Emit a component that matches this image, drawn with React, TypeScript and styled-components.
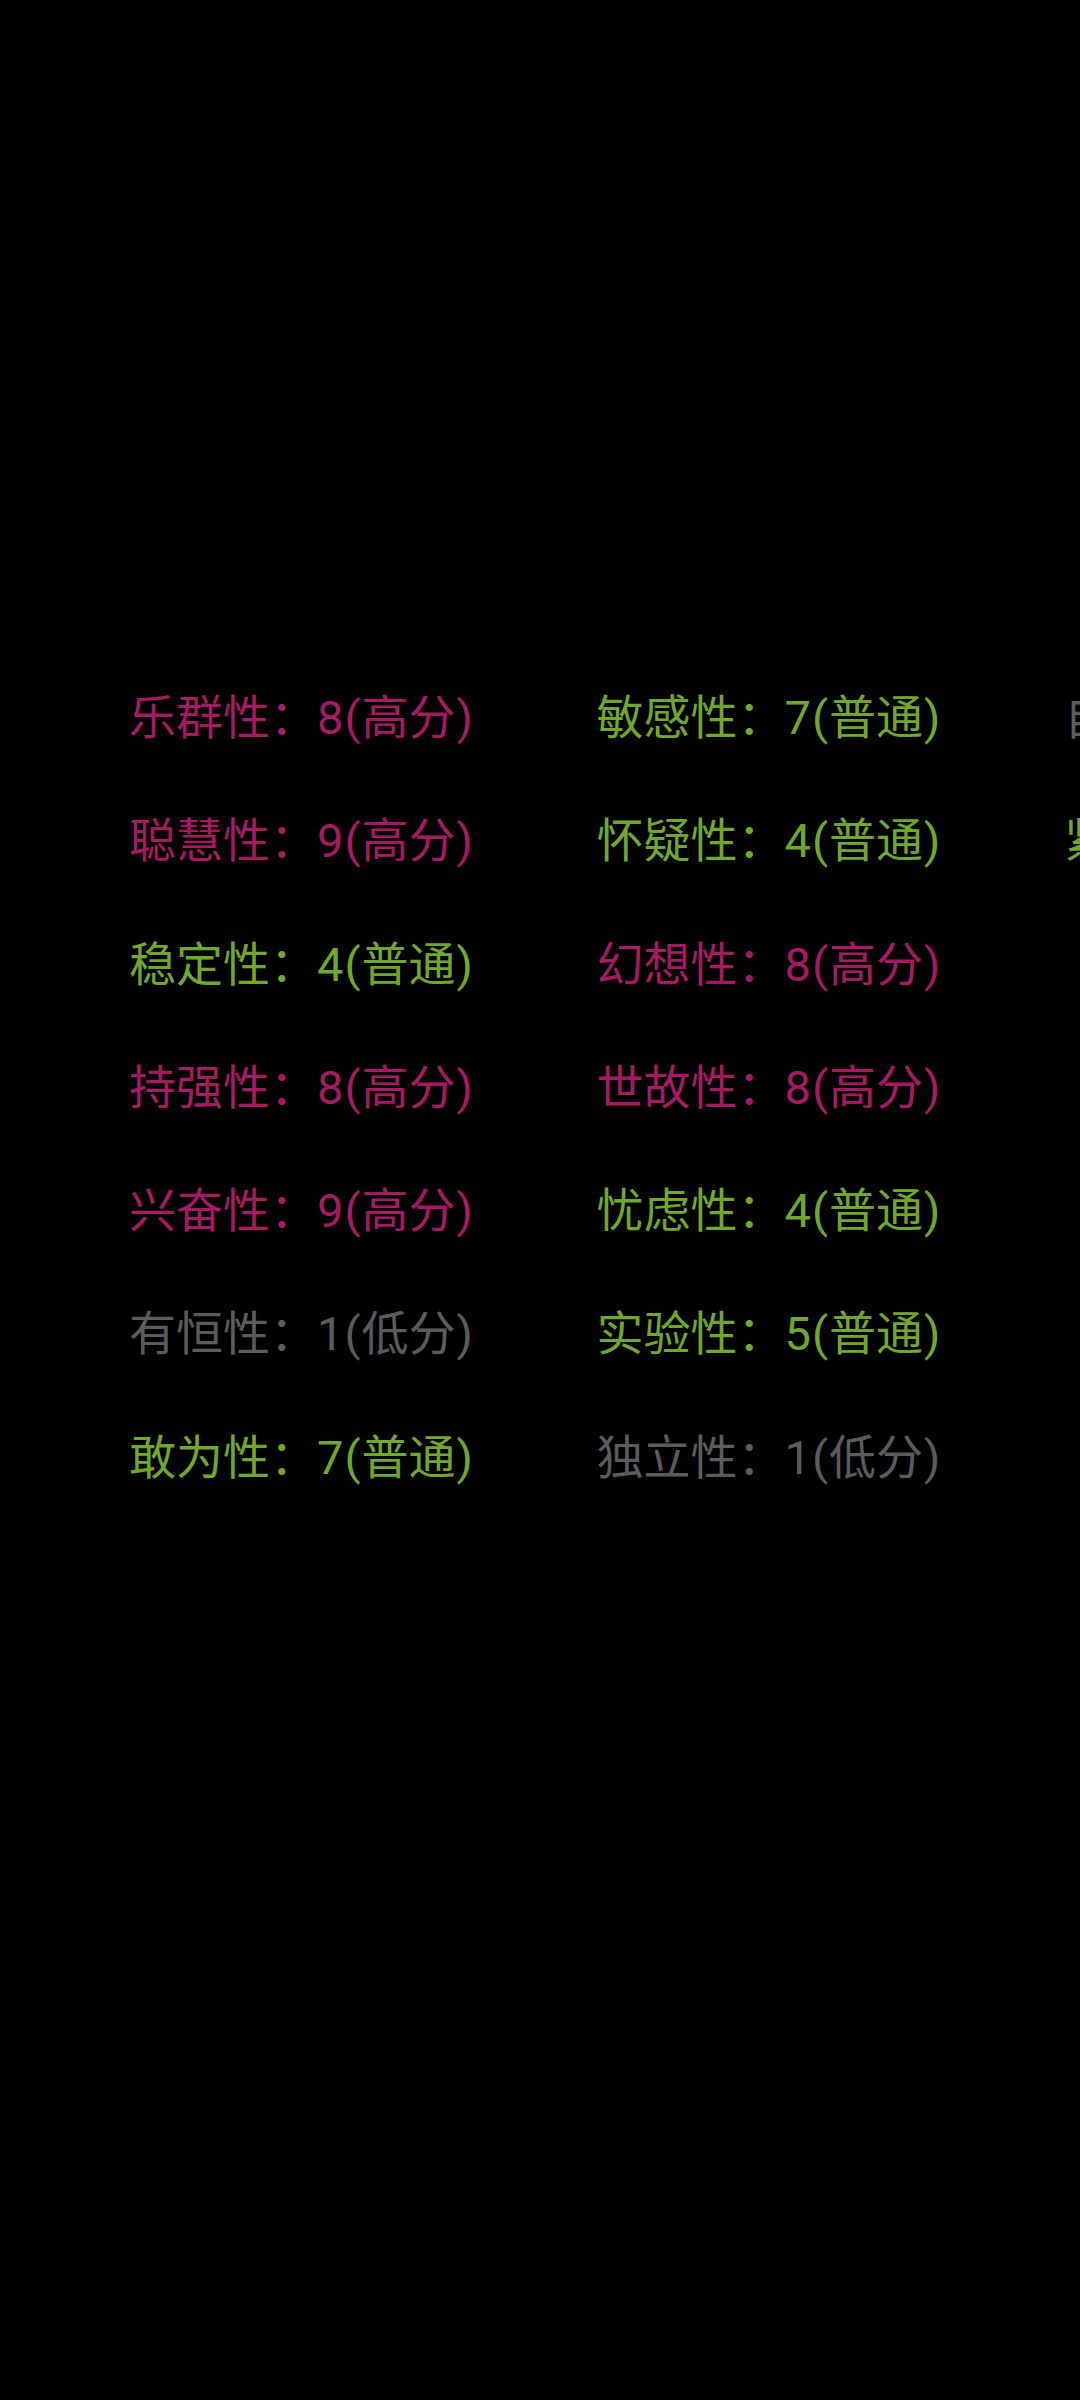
import React from "react";
import styled, { createGlobalStyle } from "styled-components";

const Global = createGlobalStyle`
  html, body {
    margin: 0;
    padding: 0;
    background: #000;
  }
  #root {
    min-height: 2400px;
    background: #000;
  }
`;

type Level = "high" | "normal" | "low";

const colors: Record<Level, string> = {
  high: "#a51b63",
  normal: "#70a82d",
  low: "#5c5c5c",
};

const labels: Record<Level, string> = {
  high: "高分",
  normal: "普通",
  low: "低分",
};

const Page = styled.div`
  width: 1080px;
  height: 2400px;
  overflow: hidden;
  background: #000;
  padding-top: 688px;
  padding-left: 129px;
  box-sizing: border-box;
`;

const Grid = styled.div`
  display: grid;
  grid-auto-flow: column;
  grid-template-rows: repeat(7, 123.3px);
  grid-auto-columns: 467.5px;
`;

const Item = styled.div<{ $level: Level }>`
  font-family: Roboto, "Noto Sans CJK SC", sans-serif;
  font-size: 47px;
  line-height: 60px;
  white-space: nowrap;
  color: ${(p) => colors[p.$level]};
`;

const Paren = styled.span`
  margin: 0 1px;
`;

const data: [string, number, Level][] = [
  ["乐群性", 8, "high"],
  ["聪慧性", 9, "high"],
  ["稳定性", 4, "normal"],
  ["持强性", 8, "high"],
  ["兴奋性", 9, "high"],
  ["有恒性", 1, "low"],
  ["敢为性", 7, "normal"],
  ["敏感性", 7, "normal"],
  ["怀疑性", 4, "normal"],
  ["幻想性", 8, "high"],
  ["世故性", 8, "high"],
  ["忧虑性", 4, "normal"],
  ["实验性", 5, "normal"],
  ["独立性", 1, "low"],
  ["自律性", 1, "low"],
  ["紧张性", 5, "normal"],
];

export default function App() {
  return (
    <>
      <Global />
      <Page>
        <Grid>
          {data.map(([name, score, level]) => (
            <Item key={name} $level={level}>
              {name}：{score}
              <Paren>(</Paren>
              {labels[level]}
              <Paren>)</Paren>
            </Item>
          ))}
        </Grid>
      </Page>
    </>
  );
}
